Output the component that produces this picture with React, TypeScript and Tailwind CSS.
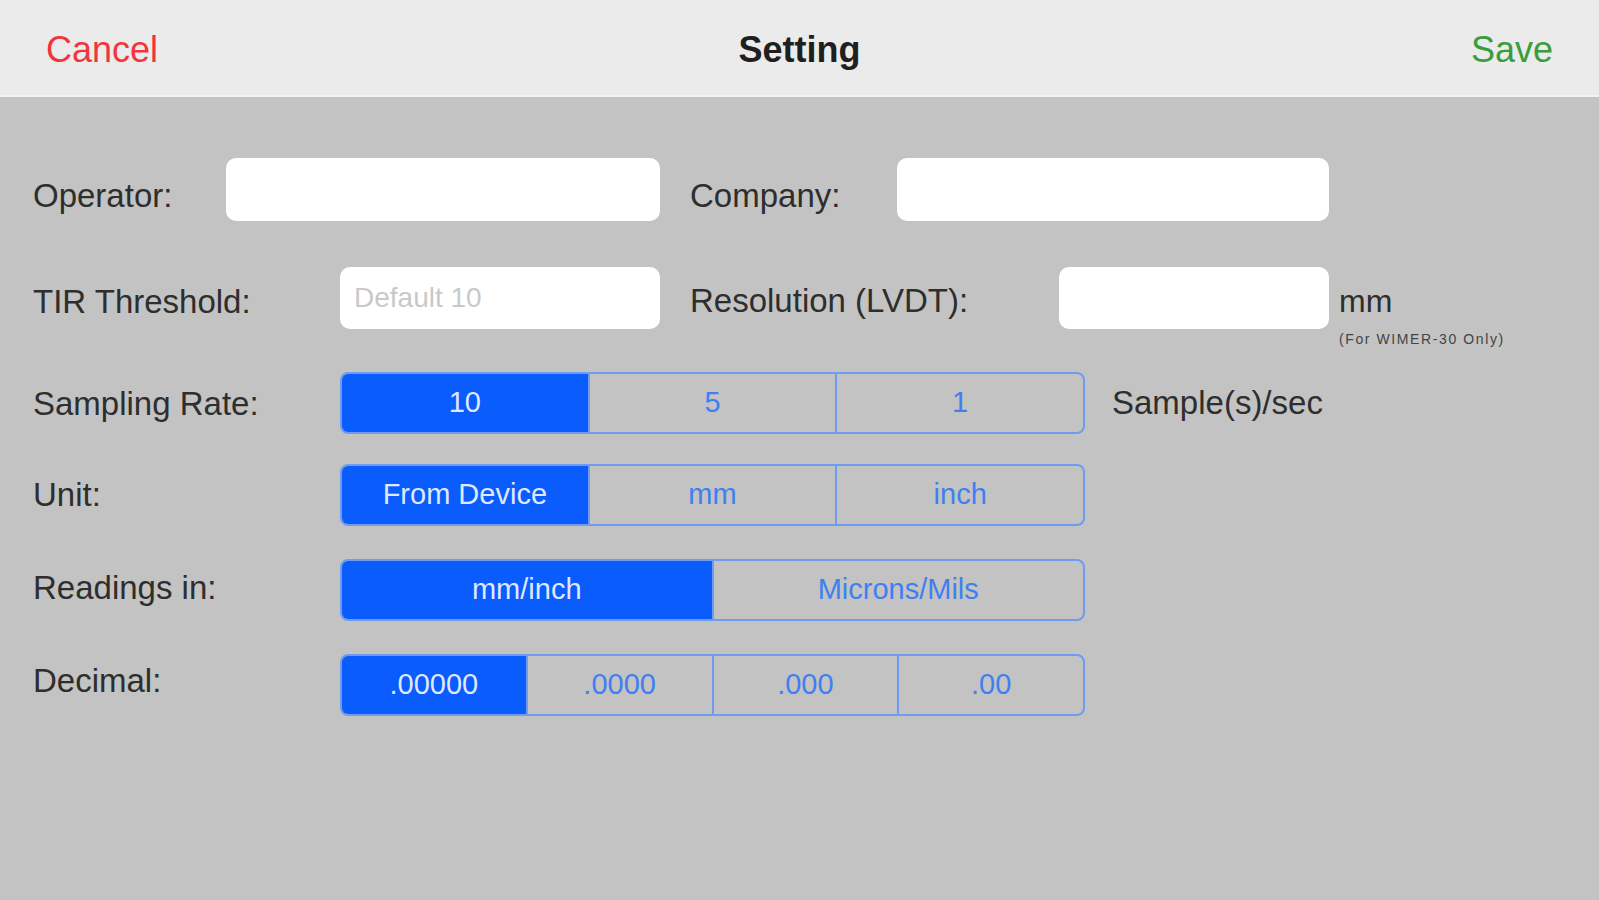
import React from 'react';

interface SegmentedProps {
  options: string[];
  active: number;
}

const Segmented: React.FC<SegmentedProps> = ({ options, active }) => (
  <div className="flex w-[745px] h-[62px] rounded-[8px] border-2 border-[#6f9cf0] overflow-hidden">
    {options.map((opt, i) => (
      <div
        key={opt}
        className={`flex-1 flex items-center justify-center text-[29px] ${
          i > 0 ? 'border-l-2 border-[#6f9cf0]' : ''
        } ${i === active ? 'bg-[#0a5cfd] text-[#dfe8ff]' : 'text-[#3f80f0]'}`}
      >
        {opt}
      </div>
    ))}
  </div>
);

const Label: React.FC<{ text: string; width: string; extra?: string }> = ({ text, width, extra = '' }) => (
  <span className={`${width} ${extra} shrink-0 text-[33px] text-[#2e2e2e]`}>{text}</span>
);

export default function App() {
  return (
    <div
      className="w-[1599px] h-[900px] bg-[#c3c3c3] flex flex-col overflow-hidden"
      style={{ fontFamily: '"Liberation Sans", Arial, sans-serif' }}
    >
      {/* top bar */}
      <div className="h-[97px] shrink-0 bg-[#ebebeb] border-b-2 border-[#f3f3f3] flex items-center justify-between px-[46px] pt-[5px]">
        <span className="w-[200px] text-[36px] text-[#f2353c]">Cancel</span>
        <span className="text-[36px] font-bold text-[#1f1f1f]">Setting</span>
        <span className="w-[200px] text-right text-[36px] text-[#3a9d3c]">Save</span>
      </div>

      <div className="pl-[33px] flex flex-col">
        {/* operator / company */}
        <div className="mt-[61px] flex items-center h-[63px]">
          <Label text="Operator:" width="w-[193px]" extra="pt-[12px]" />
          <div className="w-[434px] h-[63px] bg-white rounded-[10px]" />
          <span className="w-[30px]" />
          <Label text="Company:" width="w-[207px]" extra="pt-[12px]" />
          <div className="w-[432px] h-[63px] bg-white rounded-[10px]" />
        </div>

        {/* TIR / resolution */}
        <div className="mt-[46px] flex items-center h-[62px]">
          <Label text="TIR Threshold:" width="w-[307px]" extra="pt-[8px]" />
          <div className="w-[320px] h-[62px] bg-white rounded-[10px] flex items-center pl-[14px] text-[28px] text-[#c9c9c9]">
            Default 10
          </div>
          <span className="w-[30px]" />
          <Label text="Resolution (LVDT):" width="w-[369px]" extra="pt-[6px]" />
          <div className="w-[270px] h-[62px] bg-white rounded-[10px]" />
          <div className="relative ml-[10px] pt-[6px]">
            <span className="text-[32px] text-[#2e2e2e]">mm</span>
            <span className="absolute left-0 top-[58px] whitespace-nowrap text-[14px] tracking-[1.6px] text-[#444]">
              (For WIMER-30 Only)
            </span>
          </div>
        </div>

        {/* sampling rate */}
        <div className="mt-[43px] flex items-center">
          <Label text="Sampling Rate:" width="w-[307px]" extra="pt-[2px]" />
          <Segmented options={['10', '5', '1']} active={0} />
          <span className="ml-[27px] text-[33px] text-[#2e2e2e]">Sample(s)/sec</span>
        </div>

        {/* unit */}
        <div className="mt-[30px] flex items-center">
          <Label text="Unit:" width="w-[307px]" />
          <Segmented options={['From Device', 'mm', 'inch']} active={0} />
        </div>

        {/* readings */}
        <div className="mt-[33px] flex items-center">
          <Label text="Readings in:" width="w-[307px]" extra="pb-[4px]" />
          <Segmented options={['mm/inch', 'Microns/Mils']} active={0} />
        </div>

        {/* decimal */}
        <div className="mt-[33px] flex items-center">
          <Label text="Decimal:" width="w-[307px]" extra="pb-[8px]" />
          <Segmented options={['.00000', '.0000', '.000', '.00']} active={0} />
        </div>
      </div>
    </div>
  );
}
